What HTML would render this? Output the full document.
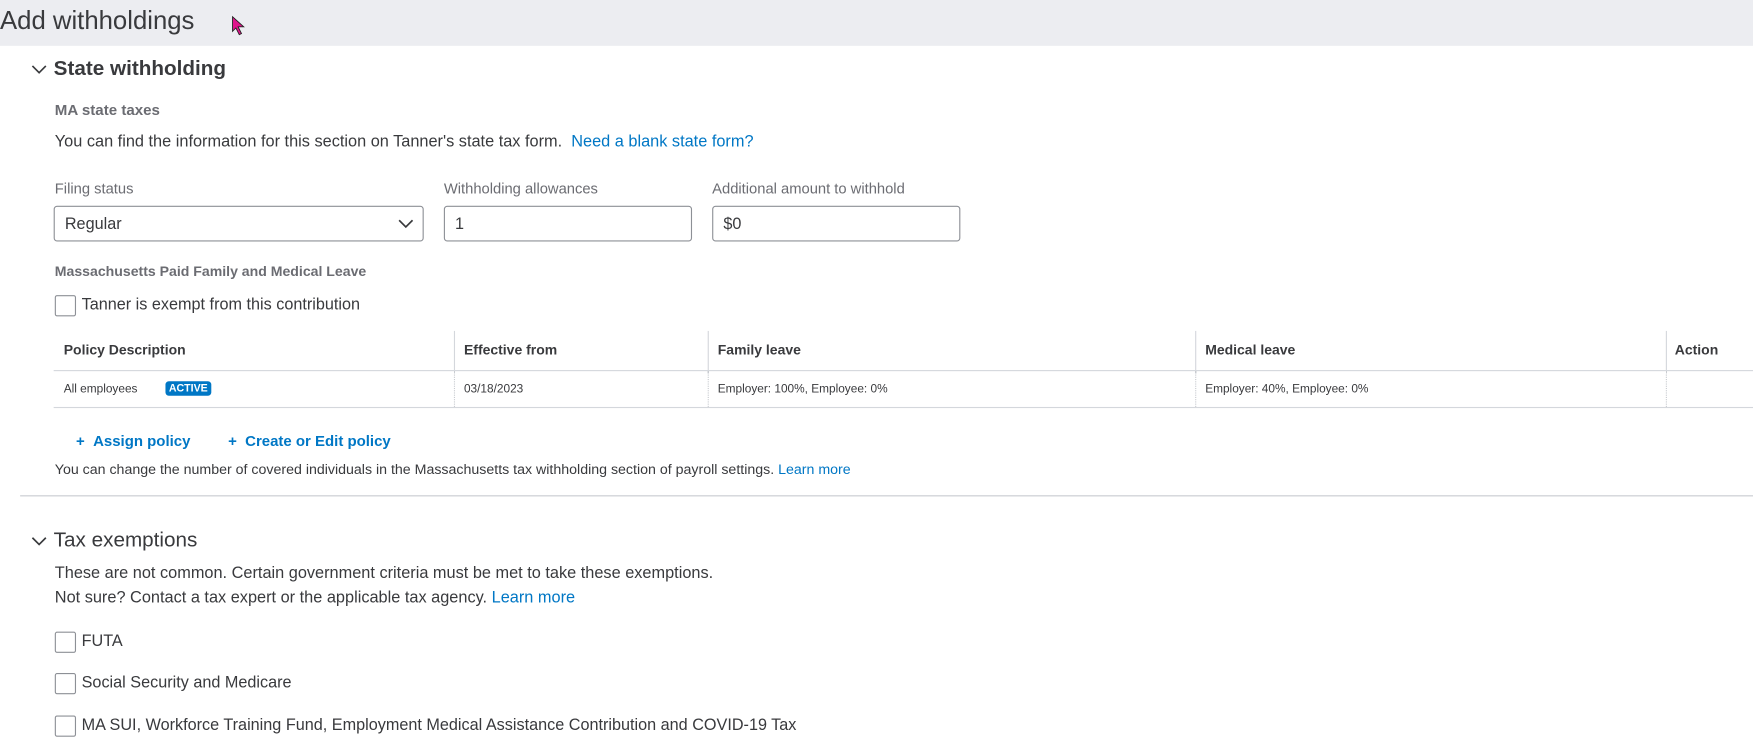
<!DOCTYPE html>
<html><head><meta charset="utf-8"><style>
*{margin:0;padding:0;box-sizing:border-box}
html,body{width:1753px;height:749px;overflow:hidden;background:#fff}
#w{position:absolute;left:0;top:0;width:1568px;height:670px;transform:scale(1.118);transform-origin:0 0;font-family:"Liberation Sans",sans-serif;color:#393a3d}
.a{position:absolute;white-space:nowrap}
.hdr{left:0;top:0;width:1568px;height:41px;background:#ecedf1}
.lnk{color:#0077c5}
.inp{position:absolute;border:1px solid #8d9096;border-radius:3px;height:32px;font-size:14px;padding:8px 9px;color:#393a3d}
.cb{position:absolute;width:19px;height:19px;border:1px solid #8d9096;border-radius:2px;background:#fff}
.th{font-size:12.5px;font-weight:bold;color:#393a3d}
.td{font-size:10.6px;color:#393a3d}
.vl{position:absolute;width:0;border-left:1px solid #d4d7dc}
.vd{position:absolute;width:0;border-left:1px dotted #c8cbd0}
.lbl{font-size:13.2px;color:#6b6c72}
</style></head><body><div id="w">
<div class="a hdr"></div>
<div class="a" style="left:0;top:5px;font-size:23px;color:#393a3d">Add withholdings</div>
<svg class="a" style="left:207px;top:14px" width="14" height="18" viewBox="0 0 14 18"><path d="M1 1 L1 14 L4 11 L7 17 L9 16 L6 10 L11 10 Z" fill="#e0148c" stroke="#222" stroke-width="0.8"/></svg>

<svg class="a" style="left:28px;top:57px" width="14" height="10"><path d="M1 2 L7 8 L13 2" fill="none" stroke="#393a3d" stroke-width="1.5"/></svg>
<div class="a" style="left:48px;top:50px;font-size:18.5px;font-weight:bold">State withholding</div>
<div class="a" style="left:49px;top:91px;font-size:13.5px;font-weight:bold;color:#6b6c72">MA state taxes</div>
<div class="a" style="left:49px;top:119px;font-size:14.6px">You can find the information for this section on Tanner's state tax form. <span class="lnk">&nbsp;Need a blank state form?</span></div>

<div class="a lbl" style="left:49px;top:161px">Filing status</div>
<div class="a lbl" style="left:397px;top:161px">Withholding allowances</div>
<div class="a lbl" style="left:637px;top:161px">Additional amount to withhold</div>
<div class="inp" style="left:48px;top:184px;width:331px;font-size:14.5px">Regular</div>
<svg class="a" style="left:356px;top:195px" width="14" height="10"><path d="M1 2 L7 8 L13 2" fill="none" stroke="#393a3d" stroke-width="1.5"/></svg>
<div class="inp" style="left:397px;top:184px;width:222px;font-size:14.5px">1</div>
<div class="inp" style="left:637px;top:184px;width:222px;font-size:14.5px">$0</div>

<div class="a" style="left:49px;top:236px;font-size:12.6px;font-weight:bold;color:#6b6c72">Massachusetts Paid Family and Medical Leave</div>
<div class="cb" style="left:49px;top:264px"></div>
<div class="a" style="left:73px;top:265px;font-size:14.5px">Tanner is exempt from this contribution</div>

<div class="a" style="left:48px;top:331px;width:1520px;border-top:1px solid #d4d7dc"></div>
<div class="a" style="left:48px;top:364px;width:1520px;border-top:1px solid #d4d7dc"></div>
<div class="vl" style="left:406px;top:296px;height:35px"></div>
<div class="vl" style="left:633px;top:296px;height:35px"></div>
<div class="vl" style="left:1069px;top:296px;height:35px"></div>
<div class="vl" style="left:1490px;top:296px;height:35px"></div>
<div class="vd" style="left:406px;top:332px;height:32px"></div>
<div class="vd" style="left:633px;top:332px;height:32px"></div>
<div class="vd" style="left:1069px;top:332px;height:32px"></div>
<div class="vd" style="left:1490px;top:332px;height:32px"></div>
<div class="a th" style="left:57px;top:306px">Policy Description</div>
<div class="a th" style="left:415px;top:306px">Effective from</div>
<div class="a th" style="left:642px;top:306px">Family leave</div>
<div class="a th" style="left:1078px;top:306px">Medical leave</div>
<div class="a th" style="left:1498px;top:306px">Action</div>
<div class="a td" style="left:57px;top:342px">All employees</div>
<div class="a" style="left:148px;top:341px;background:#0077c5;color:#fff;font-size:9.5px;font-weight:bold;padding:1px 3px;border-radius:3px">ACTIVE</div>
<div class="a td" style="left:415px;top:342px">03/18/2023</div>
<div class="a td" style="left:642px;top:342px">Employer: 100%, Employee: 0%</div>
<div class="a td" style="left:1078px;top:342px">Employer: 40%, Employee: 0%</div>

<div class="a lnk" style="left:68px;top:387px;font-size:13.4px;font-weight:bold">+ &nbsp;Assign policy</div>
<div class="a lnk" style="left:204px;top:387px;font-size:13.4px;font-weight:bold">+ &nbsp;Create or Edit policy</div>
<div class="a" style="left:49px;top:413px;font-size:12.7px">You can change the number of covered individuals in the Massachusetts tax withholding section of payroll settings. <span class="lnk">Learn more</span></div>
<div class="a" style="left:18px;top:443px;width:1550px;border-top:1px solid #c8cbd0"></div>

<svg class="a" style="left:28px;top:479px" width="14" height="10"><path d="M1 2 L7 8 L13 2" fill="none" stroke="#393a3d" stroke-width="1.5"/></svg>
<div class="a" style="left:48px;top:472px;font-size:18.5px">Tax exemptions</div>
<div class="a" style="left:49px;top:505px;font-size:14.6px">These are not common. Certain government criteria must be met to take these exemptions.</div>
<div class="a" style="left:49px;top:527px;font-size:14.6px">Not sure? Contact a tax expert or the applicable tax agency. <span class="lnk">Learn more</span></div>
<div class="cb" style="left:49px;top:565px"></div>
<div class="a" style="left:73px;top:566px;font-size:14.5px">FUTA</div>
<div class="cb" style="left:49px;top:602px"></div>
<div class="a" style="left:73px;top:603px;font-size:14.5px">Social Security and Medicare</div>
<div class="cb" style="left:49px;top:640px"></div>
<div class="a" style="left:73px;top:641px;font-size:14.5px">MA SUI, Workforce Training Fund, Employment Medical Assistance Contribution and COVID-19 Tax</div>
</div></body></html>
